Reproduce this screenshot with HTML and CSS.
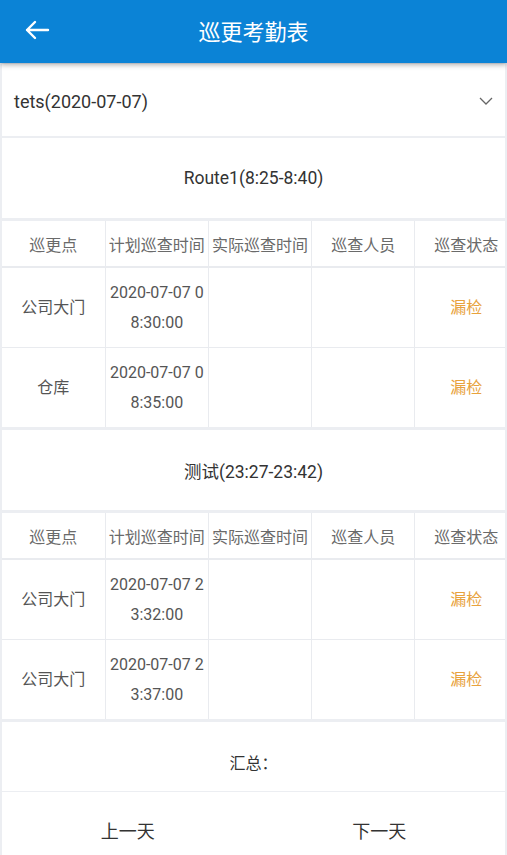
FILE: index.html
```html
<!DOCTYPE html>
<html>
<head>
    <meta charset="utf-8">
    <title>巡更考勤表</title>
    <link rel="stylesheet" href="styles.css">
</head>
<body>
    <div class="topbar">
        <span class="back">
            <svg width="26" height="20" viewBox="0 0 26 20"><path d="M24 10H3M11 2L3 10l8 8" fill="none" stroke="#fff" stroke-width="2.4" stroke-linecap="round" stroke-linejoin="round"/></svg>
        </span>
        <h1>巡更考勤表</h1>
    </div>
    <div class="page">
        <div class="picker">
            <span>tets(2020-07-07)</span>
            <svg width="14" height="8" viewBox="0 0 14 8"><path d="M1 1l6 6 6-6" fill="none" stroke="#666" stroke-width="1.3"/></svg>
        </div>

        <div class="route">
            <div class="route-title">Route1(8:25-8:40)</div>
            <div class="table-wrap">
                <table>
                    <thead>
                        <tr><th>巡更点</th><th>计划巡查时间</th><th>实际巡查时间</th><th>巡查人员</th><th>巡查状态</th></tr>
                    </thead>
                    <tbody>
                        <tr><td>公司大门</td><td>2020-07-07 08:30:00</td><td></td><td></td><td class="miss">漏检</td></tr>
                        <tr><td>仓库</td><td>2020-07-07 08:35:00</td><td></td><td></td><td class="miss">漏检</td></tr>
                    </tbody>
                </table>
            </div>
        </div>

        <div class="route">
            <div class="route-title">测试(23:27-23:42)</div>
            <div class="table-wrap">
                <table>
                    <thead>
                        <tr><th>巡更点</th><th>计划巡查时间</th><th>实际巡查时间</th><th>巡查人员</th><th>巡查状态</th></tr>
                    </thead>
                    <tbody>
                        <tr><td>公司大门</td><td>2020-07-07 23:32:00</td><td></td><td></td><td class="miss">漏检</td></tr>
                        <tr><td>公司大门</td><td>2020-07-07 23:37:00</td><td></td><td></td><td class="miss">漏检</td></tr>
                    </tbody>
                </table>
            </div>
        </div>

        <div class="summary">汇总：</div>
        <div class="footer">
            <button>上一天</button>
            <button>下一天</button>
        </div>
    </div>
</body>
</html>
```

FILE: styles.css
```css
body {
    margin: 0;
    font-family: Roboto, "Noto Sans CJK SC", sans-serif;
    background-color: #eceef2;
    overflow: hidden;
}

.topbar {
    position: relative;
    z-index: 2;
    height: 63px;
    padding-bottom: 4px;
    box-sizing: border-box;
    background-color: #0b83d6;
    box-shadow: 0 2px 5px rgba(0, 0, 0, 0.3);
    display: flex;
    align-items: center;
    justify-content: center;
}

.topbar h1 {
    margin: 0;
    color: #fff;
    font-size: 22px;
    font-weight: normal;
}

.back {
    position: absolute;
    left: 24px;
    top: 20px;
}

.page {
    padding: 0 2px;
}

.picker {
    height: 74px;
    margin-top: 1px;
    padding: 2px 12px 0 12px;
    box-sizing: border-box;
    background-color: #fff;
    display: flex;
    align-items: center;
    justify-content: space-between;
    font-size: 18px;
    color: #333;
    border-bottom: 2px solid #eceef2;
}

.route {
    margin-bottom: 3px;
}

.route-title {
    height: 80px;
    margin-bottom: 3px;
    background-color: #fff;
    display: flex;
    align-items: center;
    justify-content: center;
    font-size: 17.5px;
    color: #333;
}

.table-wrap {
    overflow: hidden;
}

table {
    width: 516px;
    table-layout: fixed;
    border-collapse: collapse;
    background-color: #fff;
}

th, td {
    width: 103.2px;
    box-sizing: border-box;
    padding: 0 4px;
    text-align: center;
    font-size: 16px;
    font-weight: normal;
    color: #6a6a6a;
    border-right: 1px solid #e9ebef;
    word-break: break-all;
}

th {
    height: 46px;
    padding: 0;
    border-bottom: 2px solid #e9ebef;
}

td {
    height: 80px;
    padding-top: 1px;
    line-height: 30px;
    color: #555;
    border-bottom: 1px solid #e9ebef;
}

tbody tr:last-child td {
    border-bottom: none;
}

td.miss {
    color: #e8a23c;
}

.summary {
    height: 70px;
    padding-top: 32px;
    box-sizing: border-box;
    line-height: 20px;
    background-color: #fff;
    text-align: center;
    font-size: 16px;
    color: #333;
    border-bottom: 1px solid #eceef2;
}

.footer {
    height: 76px;
    background-color: #fff;
    display: flex;
}

.footer button {
    flex: 1;
    border: none;
    background: none;
    font-family: inherit;
    font-size: 18px;
    color: #333;
}
```
